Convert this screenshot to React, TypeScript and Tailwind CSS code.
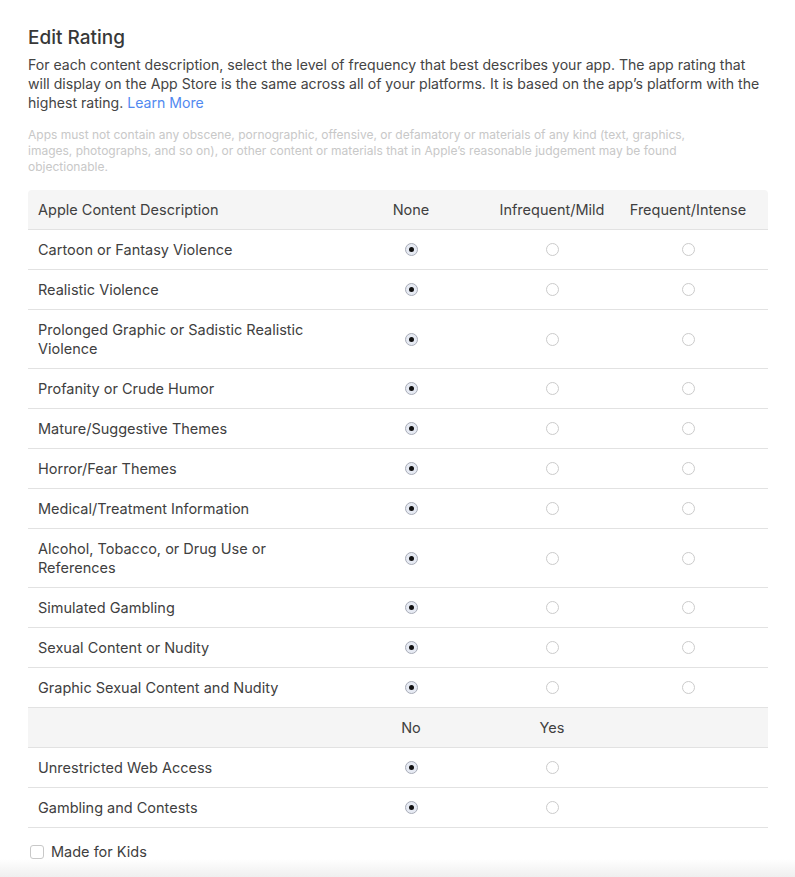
import React from 'react';

const levels = ['None', 'Infrequent/Mild', 'Frequent/Intense'];

const contentRows = [
    'Cartoon or Fantasy Violence',
    'Realistic Violence',
    'Prolonged Graphic or Sadistic Realistic Violence',
    'Profanity or Crude Humor',
    'Mature/Suggestive Themes',
    'Horror/Fear Themes',
    'Medical/Treatment Information',
    'Alcohol, Tobacco, or Drug Use or References',
    'Simulated Gambling',
    'Sexual Content or Nudity',
    'Graphic Sexual Content and Nudity',
];

const yesNoRows = ['Unrestricted Web Access', 'Gambling and Contests'];

const Radio: React.FC<{ checked?: boolean }> = ({ checked }) =>
    checked ? (
        <span className="flex h-[13px] w-[13px] items-center justify-center rounded-full border border-[#a9adb8] bg-[#e6eaf3]">
            <span className="h-[5px] w-[5px] rounded-full bg-[#111]" />
        </span>
    ) : (
        <span className="block h-[13px] w-[13px] rounded-full border border-[#cbcbcb] bg-white" />
    );

const gridCols = 'grid grid-cols-[313px_140px_142px_130px_15px]';

const App: React.FC = () => {
    return (
        <div className="relative min-h-[877px] bg-white font-['Inter','Liberation_Sans',sans-serif] text-[#404040]">
            <div className="pl-[28px] pr-[27px] pt-[24px]">
                <h1 className="text-[19px] font-medium leading-[28px] text-[#383838]">Edit Rating</h1>
                <p className="mt-[3px] text-[14.1px] leading-[19px] text-[#444]">
                    For each content description, select the level of frequency that best describes your app. The app rating that will display on the App Store is the same across all of your platforms. It is based on the app’s platform with the highest rating. <a className="text-[#5189f0]">Learn More</a>
                </p>
                <p className="mt-[15px] max-w-[700px] text-[12px] leading-[16px] text-[#c8c8c8]">
                    Apps must not contain any obscene, pornographic, offensive, or defamatory or materials of any kind (text, graphics, images, photographs, and so on), or other content or materials that in Apple’s reasonable judgement may be found objectionable.
                </p>

                <div className="mt-[15px] text-[14.5px] leading-[19px]">
                    <div className={`${gridCols} h-[40px] items-center rounded-t-[4px] border-b border-[#e2e2e2] bg-[#f5f5f5]`}>
                        <div className="pl-[10px]">Apple Content Description</div>
                        {levels.map((l) => (
                            <div key={l} className="text-center">{l}</div>
                        ))}
                        <div />
                    </div>
                    {contentRows.map((r) => (
                        <div key={r} className={`${gridCols} min-h-[40px] items-center border-b border-[#e2e2e2] py-[10px]`}>
                            <div className="pl-[10px] pr-[18px]">{r}</div>
                            <div className="flex justify-center"><Radio checked /></div>
                            <div className="flex justify-center"><Radio /></div>
                            <div className="flex justify-center"><Radio /></div>
                            <div />
                        </div>
                    ))}
                    <div className={`${gridCols} h-[40px] items-center border-b border-[#e2e2e2] bg-[#f5f5f5]`}>
                        <div />
                        <div className="text-center">No</div>
                        <div className="text-center">Yes</div>
                        <div />
                        <div />
                    </div>
                    {yesNoRows.map((r) => (
                        <div key={r} className={`${gridCols} min-h-[40px] items-center border-b border-[#e2e2e2] py-[10px]`}>
                            <div className="pl-[10px]">{r}</div>
                            <div className="flex justify-center"><Radio checked /></div>
                            <div className="flex justify-center"><Radio /></div>
                            <div />
                            <div />
                        </div>
                    ))}
                </div>

                <label className="mt-[14px] flex items-center gap-[7px] pl-[2px] text-[14.5px] leading-[19px]">
                    <span className="block h-[14px] w-[14px] rounded-[3px] border border-[#c8c8c8] bg-white" />
                    <span>Made for Kids</span>
                </label>
            </div>
            <div className="absolute bottom-0 left-0 right-0 h-[18px] bg-gradient-to-b from-white to-[#efefef]" />
        </div>
    );
};

export default App;
